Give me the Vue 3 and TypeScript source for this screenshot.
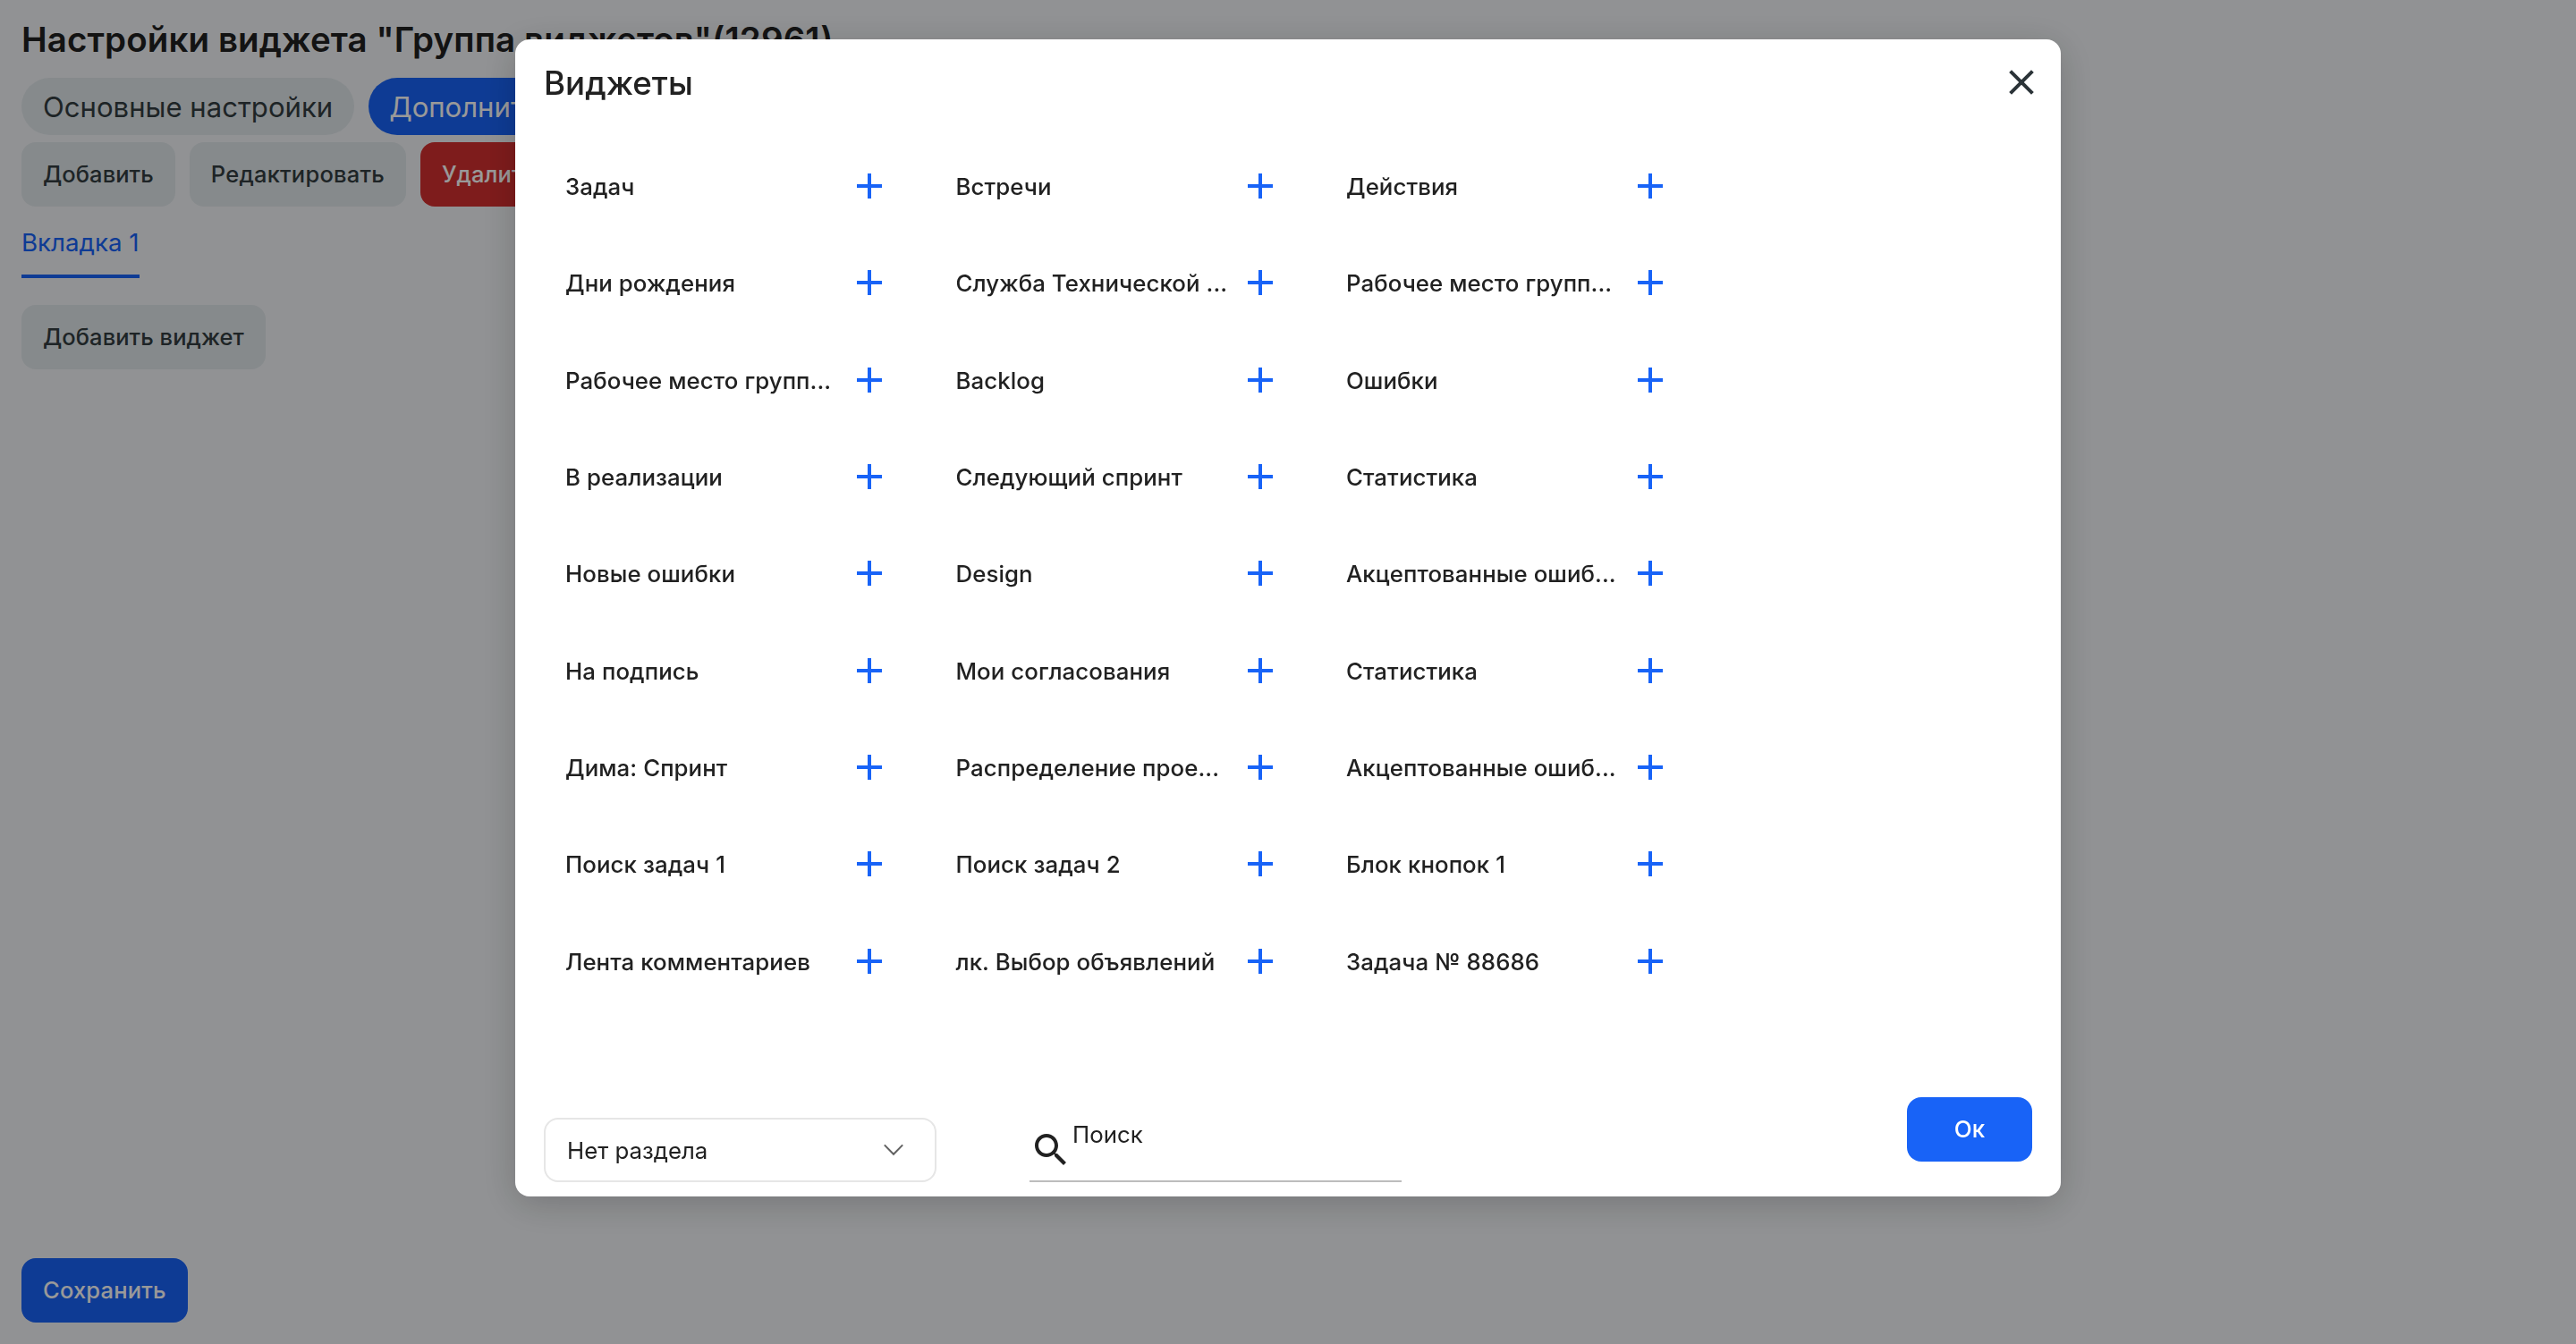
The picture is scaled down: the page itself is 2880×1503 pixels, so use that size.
<script setup lang="ts">
const widgets: string[] = [
  'Задач', 'Встречи', 'Действия',
  'Дни рождения', 'Служба Технической ...', 'Рабочее место групп...',
  'Рабочее место групп...', 'Backlog', 'Ошибки',
  'В реализации', 'Следующий спринт', 'Статистика',
  'Новые ошибки', 'Design', 'Акцептованные ошиб...',
  'На подпись', 'Мои согласования', 'Статистика',
  'Дима: Спринт', 'Распределение прое...', 'Акцептованные ошиб...',
  'Поиск задач 1', 'Поиск задач 2', 'Блок кнопок 1',
  'Лента комментариев', 'лк. Выбор объявлений', 'Задача № 88686',
]
</script>

<template>
  <div class="page">
    <h1 class="title">Настройки виджета "Группа виджетов"(12961)</h1>
    <div class="chips">
      <span class="chip">Основные настройки</span>
      <span class="chip chip-active">Дополнительно</span>
    </div>
    <div class="actions">
      <button class="btn">Добавить</button>
      <button class="btn wide">Редактировать</button>
      <button class="btn danger">Удалить</button>
    </div>
    <div class="tabs"><span class="tab">Вкладка 1</span></div>
    <div class="actions add-row"><button class="btn">Добавить виджет</button></div>
    <div class="footer"><button class="btn primary">Сохранить</button></div>
  </div>

  <div class="overlay">
    <section class="modal">
      <header class="head">
        <h2>Виджеты</h2>
        <svg class="close" width="28" height="28" viewBox="0 0 28 28"><path d="M1.6 1.6 26.4 26.4M26.4 1.6 1.6 26.4" /></svg>
      </header>
      <div class="grid">
        <div v-for="(name, i) in widgets" :key="i" class="item">
          <span class="name">{{ name }}</span>
          <svg class="plus" width="28" height="28" viewBox="0 0 28 28"><path d="M14 0V28M0 14H28" /></svg>
        </div>
      </div>
      <footer class="bottom">
        <div class="select">
          <span>Нет раздела</span>
          <svg width="24" height="16" viewBox="0 0 24 16"><path d="M1.8 2.4 12 12.8 22.2 2.4" /></svg>
        </div>
        <div class="search">
          <svg width="48" height="48" viewBox="0 0 24 24"><path d="M15.5 14h-.79l-.28-.27C15.41 12.59 16 11.11 16 9.5 16 5.91 13.09 3 9.5 3S3 5.91 3 9.5 5.91 16 9.5 16c1.61 0 3.09-.59 4.23-1.57l.27.28v.79l5 4.99L20.49 19l-4.99-5zm-6 0C7.01 14 5 11.99 5 9.5S7.01 5 9.5 5 14 7.01 14 9.5 11.99 14 9.5 14z" /></svg>
          <span>Поиск</span>
        </div>
        <button class="ok">Ок</button>
      </footer>
    </section>
  </div>
</template>

<style>
body {
  background: #f2f4f7;
}
</style>

<style scoped>
.page {
  box-sizing: border-box;
  display: flex;
  flex-direction: column;
  height: 1503px;
  padding: 16px 24px 24px;
  font-family: Inter, sans-serif;
  color: #212121;
}
.title {
  margin: 0;
  height: 71px;
  font-size: 38.5px;
  line-height: 56px;
  font-weight: 600;
  letter-spacing: 0.1px;
  white-space: nowrap;
}
.chips,
.actions {
  display: flex;
  gap: 16px;
}
.chip {
  box-sizing: border-box;
  height: 64px;
  padding: 0 24px;
  border-radius: 32px;
  background: #e0e6ea;
  color: #323c40;
  font-size: 31.1px;
  line-height: 66px;
}
.chip-active {
  padding-left: 23px;
  background: #1863f7;
  color: #fff;
}
.actions {
  margin-top: 8px;
}
button {
  border: 0;
  font-family: inherit;
}
.btn {
  height: 72px;
  padding: 0 24px;
  border-radius: 16px;
  background: #e0e6ea;
  color: #323c40;
  font-size: 25.5px;
  line-height: 72px;
  font-weight: 500;
  letter-spacing: 0.05px;
}
.wide {
  letter-spacing: 0.22px;
}
.danger {
  background: #d32f2f;
  color: #fff;
}
.primary {
  background: #1863f7;
  color: #fff;
  letter-spacing: 0.2px;
}
.tabs {
  display: flex;
  margin-top: 16px;
}
.tab {
  box-sizing: border-box;
  height: 64px;
  border-bottom: 4px solid #1863f7;
  color: #1863f7;
  font-size: 27.7px;
  line-height: 49px;
}
.add-row {
  margin-top: 30px;
}
.footer {
  display: flex;
  margin-top: auto;
}
.overlay {
  position: fixed;
  inset: 0;
  display: flex;
  justify-content: center;
  align-items: flex-start;
  padding-top: 44px;
  background: rgba(0, 0, 0, 0.4);
  font-family: Inter, sans-serif;
  color: #212121;
}
.modal {
  box-sizing: border-box;
  display: flex;
  flex-direction: column;
  width: 1728px;
  height: 1294px;
  padding: 0 32px 16px;
  border-radius: 16px;
  background: #fff;
  box-shadow: 0 8px 40px rgba(0, 0, 0, 0.2);
}
.head {
  display: flex;
  justify-content: space-between;
  height: 110px;
}
.head h2 {
  margin: 0;
  font-size: 36.7px;
  line-height: 98px;
  font-weight: 500;
}
.close {
  margin: 34px -2px 0 0;
  fill: none;
  stroke: #2b3338;
  stroke-width: 4;
}
.grid {
  display: grid;
  grid-template-columns: repeat(3, 436.5px);
  grid-auto-rows: 108.3px;
}
.item {
  display: flex;
  align-items: center;
  padding: 0 58px 0 24px;
}
.name {
  width: 303px;
  margin-right: 23px;
  padding-top: 2px;
  white-space: nowrap;
  font-size: 25.8px;
  line-height: 40px;
  font-weight: 500;
  letter-spacing: 0.08px;
}
.plus {
  flex: none;
  fill: none;
  stroke: #1863f7;
  stroke-width: 4;
}
.bottom {
  display: flex;
  align-items: flex-end;
  margin-top: auto;
}
.select {
  box-sizing: border-box;
  display: flex;
  justify-content: space-between;
  align-items: center;
  width: 439px;
  height: 72px;
  padding: 0 34px 0 24px;
  border: 2px solid #e6e6e6;
  border-radius: 16px;
  font-size: 25.8px;
}
.select svg {
  fill: none;
  stroke: #616161;
  stroke-width: 2;
}
.search {
  box-sizing: border-box;
  display: flex;
  width: 416px;
  height: 62px;
  margin-left: 104px;
  border-bottom: 2px solid #bdbdbd;
  font-size: 25.8px;
}
.search svg {
  margin-top: 2px;
  fill: #212121;
}
.search span {
  line-height: 18px;
}
.ok {
  width: 140px;
  height: 72px;
  margin: 0 0 23px auto;
  padding-bottom: 2px;
  border-radius: 16px;
  background: #1863f7;
  color: #fff;
  font-size: 26px;
  font-weight: 500;
}
</style>
